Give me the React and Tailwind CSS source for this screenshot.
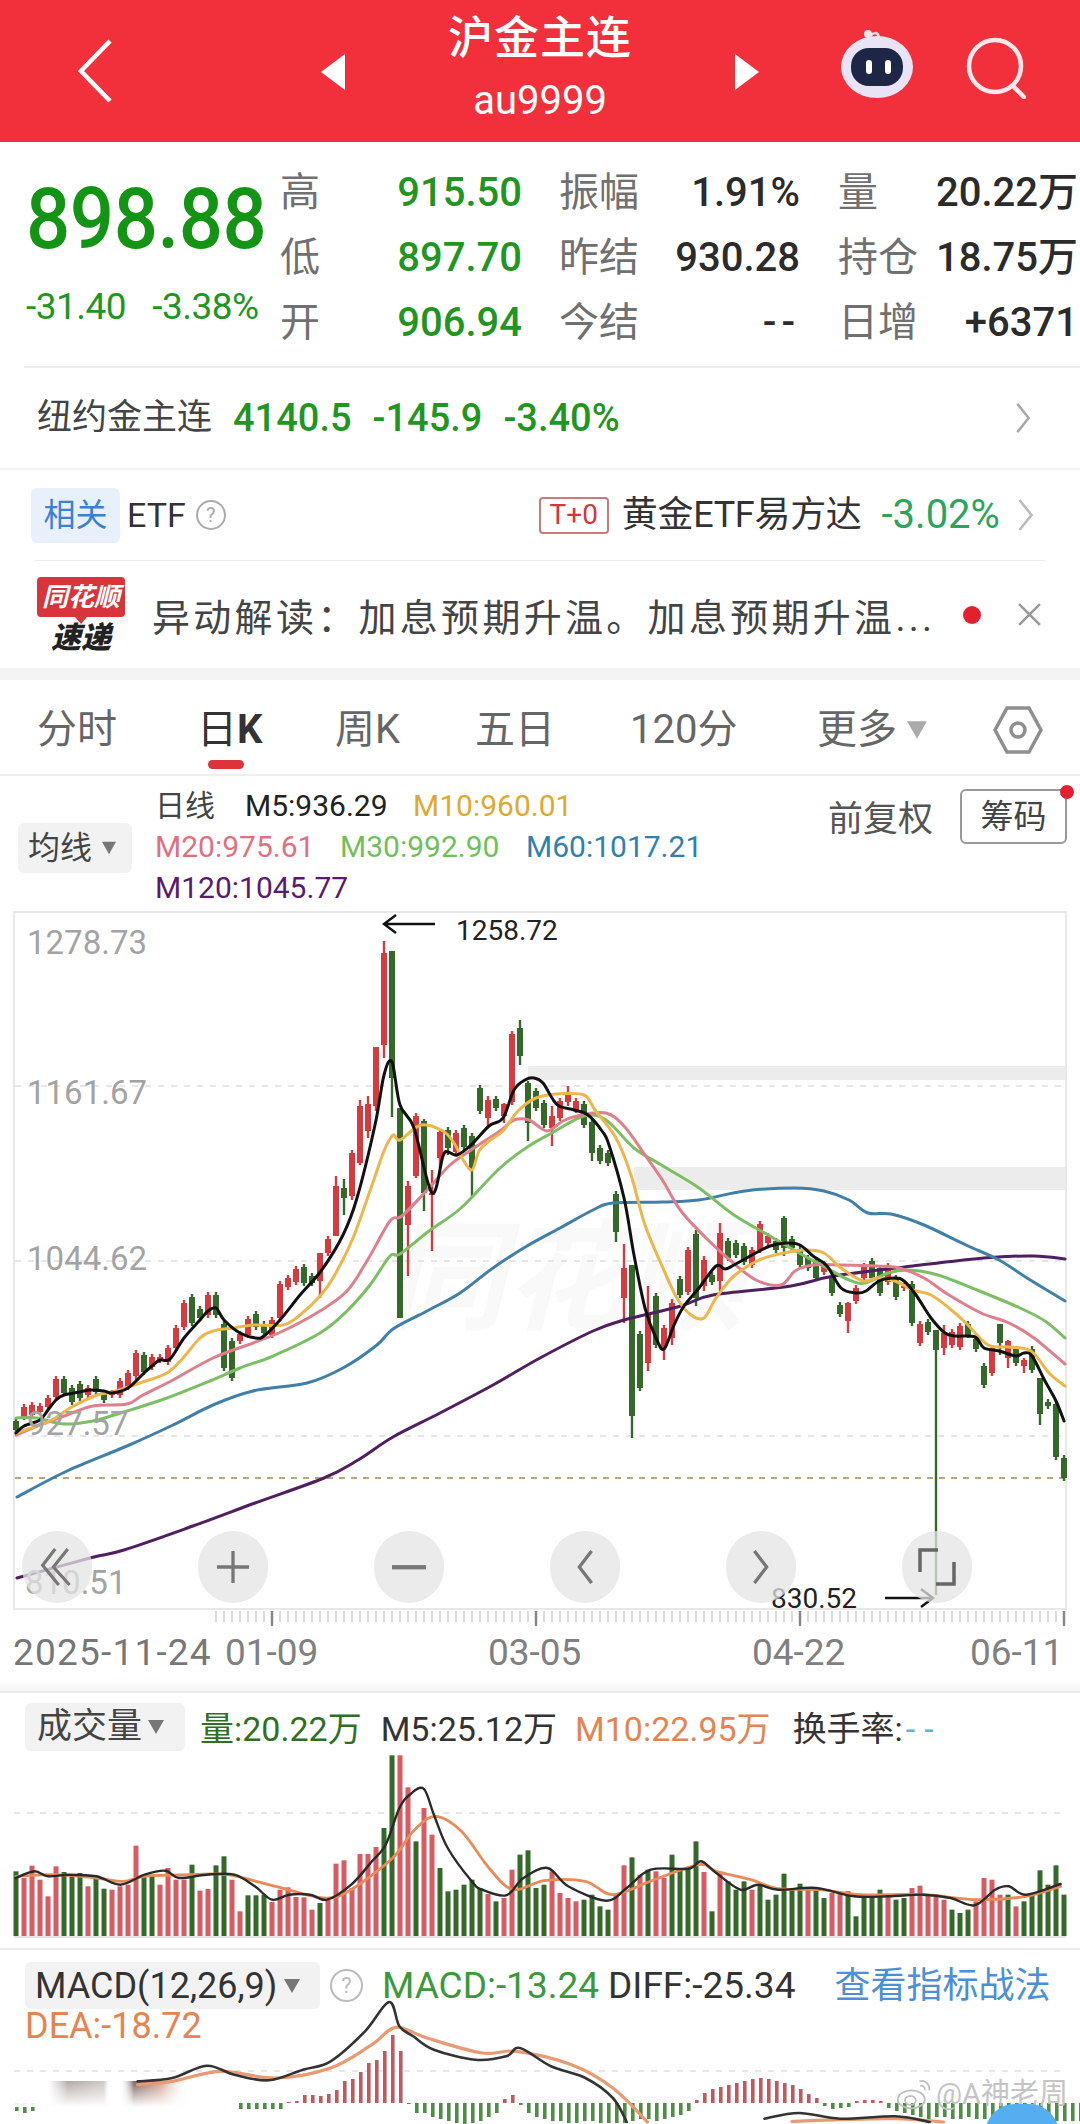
import React from 'react';

// [colour, wick top, wick bottom, body top, body bottom] - page y coords, one candle every 8px from x=16
const candles = [
  ['g',1420,1435],['r',1406,1422],['r',1404,1420],['r',1405,1417],['r',1397,1412],['r',1378,1402],['g',1378,1398],['g',1387,1407],
  ['g',1383,1403],['r',1387,1400],['g',1378,1397],['g',1393,1405],['r',1392,1400],['r',1380,1400],['r',1372,1392],['r',1352,1383,1355,1378],
  ['g',1354,1377],['r',1356,1372],['r',1356,1365],['r',1347,1367],['r',1327,1353],['r',1302,1332],['g',1296,1328],['g',1308,1323],
  ['r',1294,1320],['g',1294,1320],['g',1323,1373],['g',1340,1383],['r',1333,1346],['r',1318,1340],['g',1313,1332],['g',1323,1338],
  ['r',1319,1340],['r',1283,1323],['r',1277,1292],['r',1268,1287],['g',1266,1288],['g',1275,1288],['r',1255,1300,1255,1283],['r',1238,1258],
  ['r',1178,1238,1188,1238],['g',1181,1217,1190,1200],['r',1152,1202,1155,1198],['r',1102,1167,1108,1165],['r',1098,1140,1106,1133],['r',1049,1113,1049,1108],['r',943,1060,955,1047],['g',953,1119,953,1080],
  ['g',1110,1320,1110,1320],['r',1183,1278,1188,1227],['r',1115,1180,1118,1178],['g',1121,1213,1123,1195],['r',1172,1253,1195,1197],['r',1132,1170,1134,1160],['g',1129,1157,1132,1150],['r',1132,1157],
  ['g',1127,1152],['g',1135,1198,1138,1170],['g',1087,1116],['r',1098,1128,1102,1120],['g',1098,1113],['r',1105,1125,1106,1118],['r',1033,1107],['g',1022,1067,1030,1058],
  ['g',1083,1143,1085,1125],['g',1090,1113],['g',1102,1130],['r',1108,1148,1118,1130],['r',1100,1123],['r',1088,1108,1096,1104],['r',1100,1115],['g',1103,1130],
  ['g',1120,1163,1124,1155],['g',1147,1166],['g',1152,1168],['g',1193,1244,1196,1234],['r',1246,1325,1270,1300],['g',1267,1440,1267,1418],['g',1333,1393],['r',1288,1373,1316,1365],
  ['g',1295,1350],['r',1327,1362,1330,1350],['r',1301,1347,1305,1340],['g',1278,1300],['r',1249,1297],['g',1232,1308,1236,1300],['r',1258,1293,1262,1288],['g',1274,1287],
  ['r',1225,1293,1235,1283],['g',1240,1263],['g',1242,1260],['g',1245,1267],['r',1249,1270],['r',1223,1255,1226,1252],['r',1235,1248],['g',1240,1255],
  ['g',1218,1258,1220,1250],['g',1238,1253],['g',1248,1270],['g',1257,1273],['g',1260,1283],['r',1263,1277],['g',1275,1298],['g',1304,1319],
  ['r',1304,1335,1305,1323],['r',1287,1306],['r',1265,1283,1268,1280],['g',1260,1283],['g',1267,1298],['r',1265,1287],['g',1277,1302],['r',1285,1293],
  ['g',1283,1328],['r',1323,1348],['g',1321,1337],['g',1332,1597,1332,1352],['r',1327,1357,1335,1350],['r',1331,1350],['r',1325,1352],['g',1323,1340],
  ['g',1338,1354],['g',1365,1390],['r',1347,1378],['g',1326,1357,1326,1345],['r',1342,1370,1343,1360],['g',1348,1368],['r',1360,1375,1362,1368],['g',1348,1375],
  ['g',1380,1427,1380,1416],['g',1401,1411],['g',1403,1462],['g',1457,1483],
];

const m5 = [[16,1435],[24,1428],[40,1422],[48,1412],[56,1402],[64,1397],[80,1394],[90,1392],[104,1393],[112,1395],[128,1390],[144,1375],[152,1368],[160,1362],[170,1361],[184,1340],[200,1322],[208,1313],[216,1310],[224,1322],[240,1335],[256,1340],[264,1338],[280,1322],[300,1297],[321,1273],[343,1237],[357,1200],[375,1127],[384,1077],[392,1064],[400,1107],[414,1130],[432,1195],[443,1158],[448,1154],[457,1157],[471,1147],[489,1128],[503,1120],[514,1092],[525,1082],[534,1080],[543,1085],[552,1100],[559,1108],[574,1112],[588,1117],[602,1133],[609,1147],[624,1200],[634,1257],[645,1310],[656,1340],[664,1351],[674,1327],[684,1308],[699,1290],[716,1268],[725,1271],[734,1267],[752,1257],[770,1248],[786,1245],[800,1247],[813,1258],[827,1268],[841,1290],[856,1295],[866,1293],[879,1283],[895,1280],[904,1283],[916,1297],[931,1320],[945,1335],[956,1338],[975,1339],[984,1350],[999,1353],[1016,1358],[1024,1355],[1032,1358],[1045,1383],[1056,1403],[1064,1423]];
const m10 = [[16,1435],[50,1423],[70,1410],[97,1397],[113,1394],[140,1385],[167,1375],[183,1360],[200,1340],[213,1333],[233,1330],[253,1327],[283,1327],[300,1317],[320,1298],[333,1280],[353,1240],[371,1190],[384,1153],[393,1137],[400,1142],[421,1127],[443,1133],[454,1145],[462,1160],[472,1172],[479,1153],[489,1143],[503,1133],[518,1113],[536,1100],[557,1096],[584,1097],[595,1112],[616,1140],[631,1177],[645,1227],[663,1270],[677,1300],[691,1317],[704,1320],[716,1300],[734,1278],[759,1262],[784,1255],[806,1252],[824,1255],[841,1270],[863,1283],[877,1280],[895,1283],[913,1292],[931,1297],[949,1310],[966,1325],[988,1347],[1009,1349],[1031,1353],[1049,1375],[1065,1388]];
const m20 = [[16,1437],[40,1427],[67,1417],[93,1408],[127,1406],[143,1397],[173,1382],[213,1360],[253,1345],[283,1333],[320,1313],[347,1293],[367,1263],[390,1223],[402,1218],[429,1190],[450,1167],[471,1152],[500,1133],[514,1122],[529,1122],[547,1133],[563,1123],[581,1117],[606,1115],[624,1128],[645,1157],[663,1183],[681,1213],[706,1240],[731,1263],[756,1282],[781,1287],[795,1273],[813,1267],[841,1267],[877,1268],[899,1270],[924,1280],[949,1297],[981,1315],[1009,1325],[1034,1340],[1065,1366]];
const m30 = [[16,1420],[37,1420],[63,1426],[93,1423],[127,1413],[167,1400],[210,1383],[240,1370],[273,1358],[320,1335],[347,1313],[370,1287],[390,1258],[400,1256],[429,1233],[461,1210],[500,1170],[529,1148],[552,1135],[584,1118],[606,1122],[634,1150],[663,1168],[699,1190],[734,1217],[770,1238],[799,1255],[827,1270],[849,1282],[865,1285],[888,1275],[909,1272],[938,1277],[977,1292],[1020,1310],[1045,1323],[1065,1340]];
const m60 = [[17,1499],[67,1473],[127,1448],[173,1427],[213,1407],[253,1393],[307,1385],[343,1370],[377,1347],[393,1331],[427,1313],[460,1295],[493,1270],[527,1248],[560,1230],[593,1212],[613,1205],[663,1204],[699,1202],[745,1193],[795,1190],[824,1193],[849,1202],[868,1215],[891,1216],[924,1227],[966,1247],[999,1262],[1027,1280],[1065,1303]];
const m120 = [[17,1580],[90,1560],[124,1552],[193,1528],[255,1505],[324,1480],[358,1462],[393,1439],[440,1415],[493,1387],[540,1360],[593,1333],[624,1322],[681,1308],[713,1297],[791,1288],[834,1278],[913,1268],[984,1260],[1034,1258],[1065,1261]];

// zoomed-crop readings: x / 1.452, 1700 + y / 3
const crop = (pts) => pts.map(([x, y]) => [x / 1.452, 1700 + y / 3]);

const volTops = [520,540,503,545,595,505,522,535,525,565,540,572,575,565,560,443,530,530,560,510,545,545,500,578,573,502,475,545,640,592,592,590,612,575,568,597,598,635,615,605,497,487,570,468,468,447,390,172,172,268,430,330,410,510,580,575,560,545,570,588,610,600,515,470,457,570,560,520,585,600,610,605,590,625,635,590,502,478,530,515,520,540,470,510,510,430,522,640,525,550,575,550,575,560,605,590,527,570,557,575,575,600,585,583,580,655,595,595,575,595,605,600,570,563,590,590,605,635,645,635,610,540,545,590,590,625,610,590,517,560,502,590];
const volCols = 'grrrrrgggrggrrrrggrrrrgrrggrrgggrrrrrrgrrrrrrrggrrgrrggggggrgrrggggrrrrggggrrgrgrrggggrgrgggrggggggrggrrgggggrggrrrrrgggrrrrgrggg'.padEnd(132, 'g');
const volM5 = crop([[23,540],[50,520],[70,535],[100,530],[140,535],[175,560],[210,530],[240,518],[260,540],[300,530],[340,530],[370,565],[395,605],[420,590],[450,590],[475,605],[510,560],[540,490],[560,440],[580,330],[595,290],[615,272],[630,350],[650,450],[685,550],[700,575],[735,592],[760,540],[795,510],[825,565],[880,608],[910,570],[945,515],[1000,512],[1018,490],[1040,525],[1075,575],[1100,560],[1130,575],[1185,570],[1240,595],[1290,595],[1340,590],[1380,600],[1415,622],[1445,575],[1465,565],[1490,590],[1540,558]]);
const volM10 = crop([[23,535],[80,530],[140,540],[180,550],[210,535],[280,530],[330,530],[400,565],[470,600],[510,575],[570,480],[600,400],[632,355],[670,400],[710,510],[745,575],[790,548],[850,550],[890,590],[950,545],[1015,500],[1040,520],[1090,545],[1130,572],[1190,575],[1250,590],[1340,590],[1420,605],[1490,595],[1540,565]]);

const macdBlack = crop([[200,1150],[250,1140],[300,1103],[340,1130],[390,1147],[440,1115],[480,1090],[530,1000],[565,912],[580,985],[600,1015],[630,1055],[690,1085],[735,1075],[755,1050],[800,1105],[850,1140],[890,1200],[910,1272]]);
const macdOrange = crop([[200,1160],[250,1150],[320,1120],[400,1140],[480,1110],[540,1040],[575,988],[620,1020],[700,1065],[750,1060],[830,1100],[890,1170],[940,1272]]);
const macdBlack2 = crop([[1110,1262],[1160,1245],[1220,1262],[1300,1255],[1350,1272]]);
const macdOrange2 = crop([[1150,1270],[1220,1265],[1300,1262],[1370,1272]]);
// histogram: value is the bar height in px, + is up (red), - is down (green), same 8px step
const macdBars = [-8,-10,-8,0,0,0,0,0,0,0,0,0,0,0,0,0,0,0,0,0,0,0,0,0,0,0,0,0,-6,-6,-6,-6,-6,-6,1,2,8,8,7,9,13,22,24,31,40,43,52,68,52,-1,-10,-10,-14,-16,-18,-20,-22,-20,-18,-14,-10,4,8,-2,-10,-14,-16,-18,-18,-20,-20,-18,-18,-20,-20,-20,-20,-18,-16,-16,-18,-16,-14,-12,-8,3,10,14,16,18,20,22,24,25,24,22,20,18,14,9,5,-3,-6,-5,-4,2,3,3,2,-5,-8,-10,-12,-14,-16,-14,-14,-16,-16,-14,-16,-16,-18,-18,-18,-18,-18,-18,-18,-18,-18,-18,-18,-18];

// catmull-rom through the points so the averages don't look polygonal
const smooth = (pts) => {
  let d = `M${pts[0][0]} ${pts[0][1]}`;
  for (let i = 0; i < pts.length - 1; i++) {
    const p0 = pts[i - 1] || pts[i];
    const p1 = pts[i];
    const p2 = pts[i + 1];
    const p3 = pts[i + 2] || p2;
    const c1 = [p1[0] + (p2[0] - p0[0]) / 6, p1[1] + (p2[1] - p0[1]) / 6];
    const c2 = [p2[0] - (p3[0] - p1[0]) / 6, p2[1] - (p3[1] - p1[1]) / 6];
    d += ` C${c1[0].toFixed(1)} ${c1[1].toFixed(1)} ${c2[0].toFixed(1)} ${c2[1].toFixed(1)} ${p2[0].toFixed(1)} ${p2[1].toFixed(1)}`;
  }
  return d;
};

const RED = '#d8393f';
const GREEN = '#35692a';

const MaLine = ({ pts, color, w = 3 }) => (
  <path d={smooth(pts)} fill="none" stroke={color} strokeWidth={w} strokeLinejoin="round" strokeLinecap="round" />
);

const Tri = ({ className }) => (
  <svg viewBox="0 0 20 18" className={className}><path d="M1 1h18L10 17z" fill="currentColor" /></svg>
);

const Chevron = ({ className }) => (
  <svg viewBox="0 0 16 34" className={className} fill="none" stroke="currentColor" strokeWidth="2.6"><path d="M2 2l12 15L2 32" /></svg>
);

const StatRow = ({ a, av, b, bv, c, cv }) => (
  <div className="flex items-center h-[65px]">
    <span className="w-[98px] shrink-0 text-[#707070]">{a}</span>
    <span className="w-[144px] shrink-0 text-right text-[#1f961f] font-medium">{av}</span>
    <span className="w-[92px] shrink-0 ml-[37px] text-[#707070] whitespace-nowrap">{b}</span>
    <span className="w-[149px] shrink-0 text-right text-[#2b2b2b] font-medium">{bv}</span>
    <span className="w-[96px] shrink-0 ml-[38px] text-[#707070] whitespace-nowrap">{c}</span>
    <span className="w-[144px] shrink-0 text-right text-[#2b2b2b] font-medium whitespace-nowrap">{cv}</span>
  </div>
);

const Tab = ({ children, className }) => (
  <span className={`text-[40px] text-[#666] whitespace-nowrap ${className}`}>{children}</span>
);

const CircleBtn = ({ children }) => (
  <div className="w-[70px] h-[72px] rounded-full bg-[#e4e4e4]/75 flex items-center justify-center shrink-0">{children}</div>
);

const KChart = () => (
  <svg viewBox="15 915 1050 695" className="block w-full h-full overflow-visible">
    <rect x="528" y="1068" width="537" height="14" fill="#ececec" />
    <rect x="634" y="1169" width="431" height="23" fill="#ececec" />
    <text x="385" y="1322" fontSize="120" fontWeight="700" fontStyle="italic" fill="#f9f9f9">同花顺</text>
    {[1088, 1263, 1438].map((y) => (
      <line key={y} x1="15" x2="1065" y1={y} y2={y} stroke="#dedede" strokeWidth="1.5" strokeDasharray="6 7" />
    ))}
    <line x1="15" x2="1065" y1="1480" y2="1480" stroke="#b9a57a" strokeWidth="2" strokeDasharray="6 6" />
    {candles.map(([c, top, bot, bt, bb], i) => {
      const x = 16 + i * 8;
      const fill = c === 'r' ? RED : GREEN;
      const by = bt ?? top + 3;
      const be = bb ?? bot - 3;
      return (
        <g key={i} fill={fill}>
          <rect x={x - 1.2} y={top} width="2.4" height={bot - top} />
          <rect x={x - 3} y={by} width="6" height={be - by} />
        </g>
      );
    })}
    <MaLine pts={m120} color="#4f1f5f" />
    <MaLine pts={m60} color="#3f7fa8" />
    <MaLine pts={m30} color="#7cbf62" />
    <MaLine pts={m20} color="#e07f8c" />
    <MaLine pts={m10} color="#edb64a" />
    <MaLine pts={m5} color="#111111" />
    <g fontSize="33" fill="#a3a3a3" fontFamily="Roboto, sans-serif">
      <text x="27" y="956">1278.73</text>
      <text x="27" y="1106">1161.67</text>
      <text x="27" y="1272">1044.62</text>
      <text x="27" y="1437">927.57</text>
      <text x="25" y="1596">810.51</text>
    </g>
    <g stroke="#111" strokeWidth="2.4" fill="none">
      <path d="M384 926h51M396 917l-12 9 12 9" />
      <path d="M885 1600h48M921 1591l12 9-12 9" />
    </g>
    <g fontSize="28" fill="#222" fontFamily="Roboto, sans-serif">
      <text x="456" y="942">1258.72</text>
      <text x="771" y="1610">830.52</text>
    </g>
  </svg>
);

const VolChart = () => (
  <svg viewBox="0 1757 1080 183" className="block w-[1080px] h-[183px]">
    <line x1="14" x2="1066" y1="1815" y2="1815" stroke="#dedede" strokeWidth="1.5" strokeDasharray="6 7" />
    {volTops.map((t, i) => {
      const y = 1700 + t / 3;
      return <rect key={i} x={13.5 + i * 8} y={y} width="5" height={1938 - y} fill={volCols[i] === 'r' ? '#d85a62' : GREEN} />;
    })}
    <line x1="14" x2="1066" y1="1939" y2="1939" stroke="#e3e3e3" strokeWidth="2" />
    <MaLine pts={volM10} color="#ea8a58" w={2.8} />
    <MaLine pts={volM5} color="#2a2a2a" w={2.4} />
  </svg>
);

const MacdChart = () => (
  <svg viewBox="0 2010 1080 114" className="block w-[1080px] h-[114px] overflow-visible">
    <defs>
      <linearGradient id="smearA" x1="0" x2="1" y1="0" y2="0">
        <stop offset="0" stopColor="#bbb" stopOpacity="0.1" />
        <stop offset="0.3" stopColor="#b5aaa4" />
        <stop offset="0.9" stopColor="#cfc8c4" />
        <stop offset="1" stopColor="#fff" stopOpacity="0" />
      </linearGradient>
      <linearGradient id="smearB" x1="0" x2="1" y1="0" y2="0">
        <stop offset="0" stopColor="#fff" stopOpacity="0" />
        <stop offset="0.2" stopColor="#7a6460" />
        <stop offset="0.6" stopColor="#d8a898" />
        <stop offset="1" stopColor="#fff" stopOpacity="0" />
      </linearGradient>
      <linearGradient id="fadeDown" x1="0" x2="0" y1="0" y2="1">
        <stop offset="0" stopColor="#fff" stopOpacity="0" />
        <stop offset="1" stopColor="#fff" />
      </linearGradient>
    </defs>
    <line x1="14" x2="1066" y1="2073" y2="2073" stroke="#dedede" strokeWidth="1.5" strokeDasharray="6 7" />
    {macdBars.map((v, i) => {
      if (!v) return null;
      const x = 15 + i * 8;
      return <rect key={i} x={x} y={v > 0 ? 2105 - v : 2105} width="3.6" height={Math.abs(v)} fill={v > 0 ? '#c05a62' : '#4f8f45'} />;
    })}
    <rect x="50" y="2083" width="60" height="26" fill="url(#smearA)" />
    <rect x="120" y="2083" width="70" height="26" fill="url(#smearB)" />
    <rect x="14" y="2083" width="180" height="26" fill="url(#fadeDown)" />
    <MaLine pts={macdOrange} color="#e89a72" w={3.2} />
    <MaLine pts={macdBlack} color="#333333" w={2.6} />
    <MaLine pts={macdOrange2} color="#e89a72" w={3.2} />
    <MaLine pts={macdBlack2} color="#333333" w={2.6} />
  </svg>
);

export default function App() {
  return (
    <div className="w-[1080px] h-[2124px] overflow-hidden bg-white font-['Roboto','Noto_Sans_CJK_SC',sans-serif] relative">
      {/* title bar */}
      <div className="h-[142px] bg-[#f2303c] text-white flex items-center">
        <svg viewBox="0 0 36 64" className="w-[36px] h-[64px] ml-[77px] shrink-0" fill="none" stroke="#fff" strokeWidth="4.5"><path d="M33 2L4 32l29 30" /></svg>
        <svg viewBox="0 0 24 36" className="w-[24px] h-[36px] ml-[208px] mt-[2px] shrink-0"><path d="M24 0v36L0 18z" fill="#fff" /></svg>
        <div className="w-[390px] shrink-0 flex flex-col items-center">
          <span className="text-[45px] leading-[50px] font-medium tracking-[1px] mt-[-6px]">沪金主连</span>
          <span className="text-[40px] leading-[44px] mt-[15px]">au9999</span>
        </div>
        <svg viewBox="0 0 24 36" className="w-[24px] h-[36px] mt-[2px] shrink-0"><path d="M0 0v36L24 18z" fill="#fff" /></svg>
        <svg viewBox="0 0 74 74" className="w-[74px] h-[74px] ml-[81px] mt-[-12px] shrink-0">
          <path d="M30 10c2-6 8-7 9 0" fill="none" stroke="#f4dde4" strokeWidth="2.5" />
          <circle cx="28" cy="6" r="4" fill="#f8e6ea" />
          <ellipse cx="37" cy="39" rx="36" ry="31" fill="#e9e4f5" />
          <rect x="11" y="20" width="52" height="38" rx="18" fill="#1d2745" />
          <rect x="26" y="32" width="6" height="14" rx="3" fill="#fff" />
          <rect x="45" y="32" width="6" height="14" rx="3" fill="#fff" />
        </svg>
        <svg viewBox="0 0 60 62" className="w-[60px] h-[62px] ml-[52px] mt-[-6px] shrink-0" fill="none" stroke="#fde8ea" strokeWidth="4.5" strokeLinecap="round">
          <circle cx="29" cy="29" r="26" />
          <path d="M47 49l11 11" />
        </svg>
      </div>

      {/* quote */}
      <div className="h-[224px] flex">
        <div className="w-[280px] shrink-0 pl-[26px] pt-[31px]">
          <div className="text-[78px] leading-[84px] font-medium text-[#149414] whitespace-nowrap tracking-[-0.5px] scale-y-110 origin-top">898.88</div>
          <div className="text-[37px] leading-[36px] text-[#1f961f] mt-[32px] whitespace-nowrap tracking-[-0.5px]">
            <span>-31.40</span>
            <span className="ml-[26px]">-3.38%</span>
          </div>
        </div>
        <div className="pt-[18px] text-[40px] leading-none whitespace-nowrap">
          <StatRow a="高" av="915.50" b="振幅" bv="1.91%" c="量" cv="20.22万" />
          <StatRow a="低" av="897.70" b="昨结" bv="930.28" c="持仓" cv="18.75万" />
          <StatRow a="开" av="906.94" b="今结" bv={<span className="tracking-[5px]">--</span>} c="日增" cv="+6371" />
        </div>
      </div>
      <div className="ml-[24px] h-[2px] bg-[#ececec]" />

      {/* nymex row */}
      <div className="h-[102px] flex items-center pl-[37px] border-b-2 border-[#f4f4f4] relative text-[38px] text-[#1f961f] whitespace-nowrap font-medium">
        <span className="text-[35px] text-[#444] font-normal">纽约金主连</span>
        <span className="ml-[21px]">4140.5</span>
        <span className="ml-[21px]">-145.9</span>
        <span className="ml-[21px]">-3.40%</span>
        <Chevron className="w-[16px] h-[32px] text-[#a8a8a8] ml-auto mr-[49px]" />
      </div>

      {/* related etf */}
      <div className="h-[90px] flex items-center pl-[31px]">
        <span className="w-[89px] h-[55px] rounded-[6px] bg-[#e8f0fb] text-[#3b7fd6] text-[32px] flex items-center justify-center">相关</span>
        <span className="ml-[7px] text-[34px] text-[#333]">ETF</span>
        <span className="ml-[10px] w-[30px] h-[30px] rounded-full border-2 border-[#aaa] text-[#aaa] text-[20px] flex items-center justify-center">?</span>
        <span className="ml-[313px] w-[70px] h-[37px] rounded-[4px] border-2 border-[#c97a7a] text-[#d8343c] text-[28px] flex items-center justify-center">T+0</span>
        <span className="ml-[13px] text-[36px] text-[#333] whitespace-nowrap tracking-[-0.3px]">黄金ETF易方达</span>
        <span className="ml-[20px] text-[40px] text-[#2aa55c] whitespace-nowrap">-3.02%</span>
        <Chevron className="w-[17px] h-[34px] text-[#bbb] ml-[17px]" />
      </div>
      <div className="mx-[35px] h-[1px] bg-[#eeeeee]" />

      {/* news ticker */}
      <div className="h-[107px] flex items-center pl-[37px]">
        <div className="w-[88px] shrink-0 flex flex-col items-center">
          <div className="w-[88px] h-[40px] rounded-[4px] bg-[#d8343c] text-white text-[26px] leading-[40px] font-bold italic text-center whitespace-nowrap">同花顺</div>
          <div className="w-0 h-0 border-x-[6px] border-x-transparent border-t-[7px] border-t-[#d8343c]" />
          <div className="text-[30px] leading-[30px] font-black italic text-[#222] whitespace-nowrap mt-[-1px]">速递</div>
        </div>
        <span className="ml-[27px] w-[784px] mt-[8px] text-[38px] tracking-[3.3px] text-[#444] whitespace-nowrap overflow-hidden">异动解读：加息预期升温。加息预期升温...</span>
        <span className="ml-[27px] w-[18px] h-[18px] rounded-full bg-[#e5202e] shrink-0" />
        <svg viewBox="0 0 24 24" className="w-[25px] h-[25px] ml-[36px] shrink-0" fill="none" stroke="#999" strokeWidth="2.5"><path d="M2 2l20 20M22 2L2 22" /></svg>
      </div>
      <div className="h-[12px] bg-[#f4f4f4]" />

      {/* period tabs */}
      <div className="h-[96px] border-b-2 border-[#efefef] flex items-center pl-[37px] pt-[6px] relative">
        <Tab className="w-[160px]">分时</Tab>
        <div className="w-[138px] relative">
          <span className="text-[40px] text-[#333]">日<b className="font-bold">K</b></span>
          <div className="absolute left-[11px] top-[60px] w-[36px] h-[9px] rounded-full bg-[#dd3439]" />
        </div>
        <Tab className="w-[140px]">周K</Tab>
        <Tab className="w-[155px]">五日</Tab>
        <Tab className="w-[187px]">120分</Tab>
        <Tab>更多</Tab>
        <Tri className="w-[22px] h-[20px] text-[#aaa] ml-[9px]" />
        <svg viewBox="0 0 50 50" className="w-[50px] h-[50px] ml-[65px] shrink-0" fill="none" stroke="#8f8f8f" strokeWidth="3.5">
          <path d="M14 3h22l12 22-12 22H14L2 25z" />
          <circle cx="25" cy="25" r="7" />
        </svg>
      </div>

      {/* ma legend */}
      <div className="h-[135px] flex relative text-[30px] leading-[41px] whitespace-nowrap">
        <div className="ml-[18px] mt-[47px] w-[114px] h-[50px] rounded-[6px] bg-[#f2f2f2] flex items-center pl-[10px] text-[32px] text-[#444] shrink-0">
          均线
          <Tri className="w-[16px] h-[14px] text-[#777] ml-[9px]" />
        </div>
        <div className="ml-[23px] pt-[9px]">
          <div className="flex">
            <span className="text-[#444] w-[90px]">日线</span>
            <span className="text-[#222] w-[168px]">M5:936.29</span>
            <span className="text-[#dfa92f]">M10:960.01</span>
          </div>
          <div className="flex">
            <span className="text-[#e0707f] w-[185px]">M20:975.61</span>
            <span className="text-[#6fbf5c] w-[186px]">M30:992.90</span>
            <span className="text-[#2f7fb0]">M60:1017.21</span>
          </div>
          <div className="text-[#5a1a70]">M120:1045.77</div>
        </div>
        <span className="absolute left-[828px] top-[22px] text-[35px] leading-[44px] text-[#555]">前复权</span>
        <div className="absolute left-[960px] top-[13px] w-[107px] h-[55px] rounded-[6px] border-2 border-[#999] flex items-center justify-center text-[33px] text-[#444]">筹码</div>
        <div className="absolute left-[1060px] top-[9px] w-[14px] h-[14px] rounded-full bg-[#e5202e]" />
      </div>

      {/* kline */}
      <div className="mx-[13px] h-[699px] border-2 border-[#e8e8e8] relative">
        <KChart />
        <div className="absolute left-[7px] top-[618px] flex gap-[106px]">
          <CircleBtn>
            <svg viewBox="0 0 40 44" className="w-[36px] h-[40px]" fill="none" stroke="#777" strokeWidth="3.5"><path d="M18 2L4 20l18 22M32 2L16 22l18 20" /></svg>
          </CircleBtn>
          <CircleBtn>
            <svg viewBox="0 0 36 36" className="w-[34px] h-[34px]" fill="none" stroke="#777" strokeWidth="3.5"><path d="M18 1v34M1 18h34" /></svg>
          </CircleBtn>
          <CircleBtn>
            <svg viewBox="0 0 36 8" className="w-[34px] h-[8px]"><rect width="36" height="4.5" y="2" fill="#777" /></svg>
          </CircleBtn>
          <CircleBtn>
            <svg viewBox="0 0 18 36" className="w-[18px] h-[34px]" fill="none" stroke="#777" strokeWidth="3.5"><path d="M16 1L3 18l13 17" /></svg>
          </CircleBtn>
          <CircleBtn>
            <svg viewBox="0 0 18 36" className="w-[18px] h-[34px]" fill="none" stroke="#777" strokeWidth="3.5"><path d="M2 1l13 17L2 35" /></svg>
          </CircleBtn>
          <CircleBtn>
            <svg viewBox="0 0 38 38" className="w-[38px] h-[38px]" fill="none" stroke="#666" strokeWidth="3.5"><path d="M20 2H2v22M18 36h18V14" /></svg>
          </CircleBtn>
        </div>
      </div>

      {/* x axis */}
      <svg viewBox="0 1612 1080 18" className="block w-[1080px] h-[18px]">
        {Array.from({ length: 106 }, (_, i) => 216 + i * 8).map((x) => (
          <line key={x} x1={x} x2={x} y1="1613" y2="1624" stroke="#cfcfcf" strokeWidth="1.5" />
        ))}
        {[272, 536, 800, 1064].map((x) => (
          <line key={x} x1={x} x2={x} y1="1613" y2="1628" stroke="#888" strokeWidth="2.5" />
        ))}
      </svg>
      <div className="h-[50px] flex items-center text-[37px] text-[#808080] whitespace-nowrap">
        <span className="ml-[13px] w-[194px] text-[#777] tracking-[1.2px]">2025-11-24</span>
        <span className="ml-[18px] w-[95px]">01-09</span>
        <span className="ml-[168px] w-[95px]">03-05</span>
        <span className="ml-[169px] w-[95px]">04-22</span>
        <span className="ml-[123px] w-[95px]">06-11</span>
      </div>
      <div className="h-[13px] bg-gradient-to-b from-white to-[#f5f5f5]" />

      {/* volume */}
      <div className="h-[64px] border-t-2 border-[#ececec] flex items-center text-[34px] whitespace-nowrap">
        <div className="ml-[25px] w-[160px] h-[48px] rounded-[6px] bg-[#f2f2f2] flex items-center pl-[12px] mt-[6px] text-[35px] text-[#444] shrink-0">
          成交量
          <Tri className="w-[18px] h-[16px] text-[#777] ml-[5px]" />
        </div>
        <div className="flex items-center mt-[10px]">
          <span className="ml-[15px] text-[#2f6f1f]">量:20.22万</span>
          <span className="ml-[19px] text-[#333]">M5:25.12万</span>
          <span className="ml-[18px] text-[#e58450]">M10:22.95万</span>
          <span className="ml-[22px] text-[#333]">换手率:</span>
          <span className="ml-[3px] text-[#5ab4e0] tracking-[9px]">--</span>
        </div>
      </div>
      <VolChart />
      <div className="h-[10px]" />

      {/* macd */}
      <div className="h-[60px] border-t-2 border-[#ececec] flex items-center text-[37px] whitespace-nowrap">
        <div className="ml-[25px] w-[295px] h-[47px] rounded-[6px] bg-[#f2f2f2] flex items-center pl-[10px] text-[36px] text-[#333] shrink-0 mt-[13px]">
          MACD(12,26,9)
          <Tri className="w-[18px] h-[16px] text-[#777] ml-[6px]" />
        </div>
        <span className="ml-[10px] mt-[13px] w-[33px] h-[33px] rounded-full border-2 border-[#bbb] text-[#bbb] text-[22px] flex items-center justify-center shrink-0">?</span>
        <div className="flex items-center mt-[14px]">
          <span className="ml-[19px] text-[#3a9a3a]">MACD:-13.24</span>
          <span className="ml-[9px] text-[#333]">DIFF:-25.34</span>
          <span className="ml-[39px] text-[36px] text-[#4a8fd8]">查看指标战法</span>
        </div>
      </div>
      <div className="relative h-[114px]">
        <MacdChart />
        <span className="absolute left-[25px] top-[-1px] text-[36px] leading-[38px] text-[#e58450] whitespace-nowrap">DEA:-18.72</span>
        {/* weibo mark */}
        <div className="absolute left-[896px] top-[66px] flex items-center text-[29px] leading-[40px] text-[#c4c4c4] whitespace-nowrap">
          <svg viewBox="0 0 40 36" className="w-[36px] h-[34px] mr-[4px]" fill="none" stroke="#bdbdbd" strokeWidth="2">
            <ellipse cx="17" cy="24" rx="15" ry="10" />
            <ellipse cx="16" cy="25" rx="6" ry="5" />
            <path d="M26 4c6-2 12 3 11 10M27 9c3-1 6 2 5 5" />
          </svg>
          @A神老周
        </div>
        <div className="absolute left-[985px] top-[96px] w-[74px] h-[60px] rounded-full bg-[#55aef0]" />
      </div>
    </div>
  );
}
